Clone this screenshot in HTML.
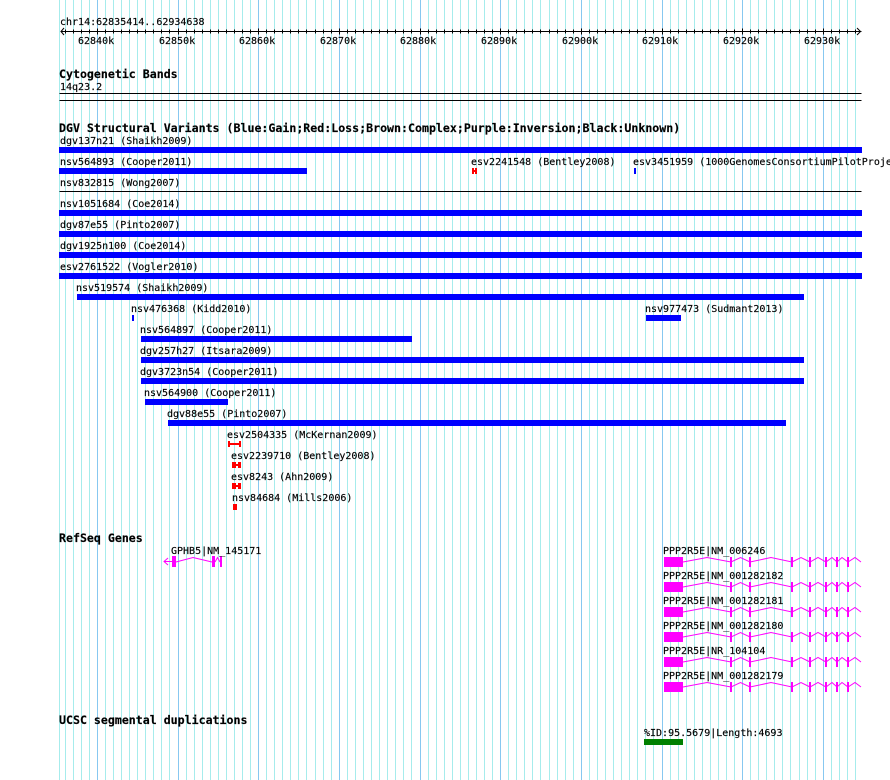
<!DOCTYPE html>
<html><head><meta charset="utf-8"><title>Genome Browser</title>
<style>
html,body{margin:0;padding:0;background:#fff;width:890px;height:780px;overflow:hidden}
svg{display:block}
text{font-family:"DejaVu Sans Mono","Liberation Mono",monospace;font-size:10px;fill:#000;stroke:#000;stroke-width:.15px}
.b{font-weight:bold;font-size:11.6px}
</style></head><body>
<svg width="890" height="780" viewBox="0 0 890 780" xmlns="http://www.w3.org/2000/svg">
<g shape-rendering="crispEdges">
<path fill="#a6ecec" d="M59 0h1v780h-1zM65 0h1v780h-1zM73 0h1v780h-1zM81 0h1v780h-1zM89 0h1v780h-1zM105 0h1v780h-1zM113 0h1v780h-1zM121 0h1v780h-1zM129 0h1v780h-1zM137 0h1v780h-1zM145 0h1v780h-1zM153 0h1v780h-1zM161 0h1v780h-1zM169 0h1v780h-1zM186 0h1v780h-1zM194 0h1v780h-1zM202 0h1v780h-1zM210 0h1v780h-1zM218 0h1v780h-1zM226 0h1v780h-1zM234 0h1v780h-1zM242 0h1v780h-1zM250 0h1v780h-1zM266 0h1v780h-1zM274 0h1v780h-1zM282 0h1v780h-1zM290 0h1v780h-1zM298 0h1v780h-1zM306 0h1v780h-1zM315 0h1v780h-1zM323 0h1v780h-1zM331 0h1v780h-1zM347 0h1v780h-1zM355 0h1v780h-1zM363 0h1v780h-1zM371 0h1v780h-1zM379 0h1v780h-1zM387 0h1v780h-1zM395 0h1v780h-1zM403 0h1v780h-1zM411 0h1v780h-1zM428 0h1v780h-1zM436 0h1v780h-1zM444 0h1v780h-1zM452 0h1v780h-1zM460 0h1v780h-1zM468 0h1v780h-1zM476 0h1v780h-1zM484 0h1v780h-1zM492 0h1v780h-1zM508 0h1v780h-1zM516 0h1v780h-1zM524 0h1v780h-1zM532 0h1v780h-1zM540 0h1v780h-1zM549 0h1v780h-1zM557 0h1v780h-1zM565 0h1v780h-1zM573 0h1v780h-1zM589 0h1v780h-1zM597 0h1v780h-1zM605 0h1v780h-1zM613 0h1v780h-1zM621 0h1v780h-1zM629 0h1v780h-1zM637 0h1v780h-1zM645 0h1v780h-1zM653 0h1v780h-1zM670 0h1v780h-1zM678 0h1v780h-1zM686 0h1v780h-1zM694 0h1v780h-1zM702 0h1v780h-1zM710 0h1v780h-1zM718 0h1v780h-1zM726 0h1v780h-1zM734 0h1v780h-1zM750 0h1v780h-1zM758 0h1v780h-1zM766 0h1v780h-1zM774 0h1v780h-1zM782 0h1v780h-1zM790 0h1v780h-1zM799 0h1v780h-1zM807 0h1v780h-1zM815 0h1v780h-1zM831 0h1v780h-1zM839 0h1v780h-1zM847 0h1v780h-1zM855 0h1v780h-1z"/>
<path fill="#87c8f0" d="M97 0h1v780h-1zM178 0h1v780h-1zM258 0h1v780h-1zM339 0h1v780h-1zM420 0h1v780h-1zM500 0h1v780h-1zM581 0h1v780h-1zM662 0h1v780h-1zM742 0h1v780h-1zM823 0h1v780h-1z"/>
<path fill="none" stroke="#000" stroke-width="1" transform="translate(.5 .5)" d="M60 31H861M65 29V33M73 29V33M81 29V33M89 29V33M97 28V34M105 29V33M113 29V33M121 29V33M129 29V33M137 29V33M145 29V33M153 29V33M161 29V33M169 29V33M178 28V34M186 29V33M194 29V33M202 29V33M210 29V33M218 29V33M226 29V33M234 29V33M242 29V33M250 29V33M258 28V34M266 29V33M274 29V33M282 29V33M290 29V33M298 29V33M306 29V33M315 29V33M323 29V33M331 29V33M339 28V34M347 29V33M355 29V33M363 29V33M371 29V33M379 29V33M387 29V33M395 29V33M403 29V33M411 29V33M420 28V34M428 29V33M436 29V33M444 29V33M452 29V33M460 29V33M468 29V33M476 29V33M484 29V33M492 29V33M500 28V34M508 29V33M516 29V33M524 29V33M532 29V33M540 29V33M549 29V33M557 29V33M565 29V33M573 29V33M581 28V34M589 29V33M597 29V33M605 29V33M613 29V33M621 29V33M629 29V33M637 29V33M645 29V33M653 29V33M662 28V34M670 29V33M678 29V33M686 29V33M694 29V33M702 29V33M710 29V33M718 29V33M726 29V33M734 29V33M742 28V34M750 29V33M758 29V33M766 29V33M774 29V33M782 29V33M790 29V33M799 29V33M807 29V33M815 29V33M823 28V34M831 29V33M839 29V33M847 29V33M855 29V33"/>
<path fill="none" stroke="#000" stroke-width="1" transform="translate(.5 .5)" d="M59 93H861M59 100H861M59 191H861"/>
</g>
<path d="M64 28L61 31.500L64 35M857 28L860.500 31.500L857 35" stroke="#000" fill="none"/>
<g shape-rendering="crispEdges" fill="#0000ff">
<rect x="59" y="147" width="803" height="6"/>
<rect x="59" y="168" width="248" height="6"/>
<rect x="634" y="168" width="2" height="6"/>
<rect x="59" y="210" width="803" height="6"/>
<rect x="59" y="231" width="803" height="6"/>
<rect x="59" y="252" width="803" height="6"/>
<rect x="59" y="273" width="803" height="6"/>
<rect x="77" y="294" width="727" height="6"/>
<rect x="132" y="315" width="2" height="6"/>
<rect x="646" y="315" width="35" height="6"/>
<rect x="141" y="336" width="271" height="6"/>
<rect x="141" y="357" width="663" height="6"/>
<rect x="141" y="378" width="663" height="6"/>
<rect x="145" y="399" width="83" height="6"/>
<rect x="168" y="420" width="618" height="6"/>
</g>
<g shape-rendering="crispEdges" fill="#ff0000">
<rect x="472" y="168" width="2" height="6"/><rect x="475" y="168" width="2" height="6"/><rect x="474" y="170" width="1" height="2"/>
<rect x="228" y="441" width="2" height="6"/><rect x="239" y="441" width="2" height="6"/><rect x="230" y="443" width="9" height="2"/>
<rect x="232" y="462" width="4" height="6"/><rect x="238" y="462" width="3" height="6"/><rect x="236" y="464" width="2" height="2"/>
<rect x="232" y="483" width="4" height="6"/><rect x="238" y="483" width="3" height="6"/><rect x="236" y="485" width="2" height="2"/>
<rect x="233" y="504" width="4" height="6"/>
</g>
<rect x="644" y="739" width="39" height="6" fill="#008000" shape-rendering="crispEdges"/>
<g fill="#ff00ff" shape-rendering="crispEdges">
<rect x="172" y="556" width="4" height="11"/><rect x="212" y="556" width="3" height="11"/><rect x="220" y="556" width="2" height="11"/>
<rect x="664" y="557" width="19" height="10"/><rect x="664" y="582" width="19" height="10"/><rect x="664" y="607" width="19" height="10"/><rect x="664" y="632" width="19" height="10"/><rect x="664" y="657" width="19" height="10"/><rect x="664" y="682" width="19" height="10"/>
</g>
<path d="M168 558L164 561.500L168 565M164 561.500H172M176 562L193 557.500L212 562M215 562L217.500 557.500L220 562" fill="none" stroke="#ff00ff"/>
<defs><g id="g"><path fill="none" stroke="#ff00ff" d="M683 562L707 557.500L731 562L740.500 557.500L750 562L771 557.500L792 562L801 557.500L810 562L818 557.500L826 562L832 557.500L837 562L842 557.500L848 562L855 557.500L861 562"/><path fill="none" stroke="#ff00ff" stroke-width="2" shape-rendering="crispEdges" d="M731 557V567M750 557V567M792 557V567M810 557V567M826 557V567M837 557V567M848 557V567"/></g></defs>
<use href="#g"/><use href="#g" y="25"/><use href="#g" y="50"/><use href="#g" y="75"/><use href="#g" y="100"/><use href="#g" y="125"/>
<text x="60" y="25">chr14:62835414..62934638</text>
<text x="78" y="44">62840k</text><text x="159" y="44">62850k</text><text x="239" y="44">62860k</text><text x="320" y="44">62870k</text><text x="400" y="44">62880k</text><text x="481" y="44">62890k</text><text x="562" y="44">62900k</text><text x="642" y="44">62910k</text><text x="723" y="44">62920k</text><text x="804" y="44">62930k</text>
<text class="b" x="59" y="78">Cytogenetic Bands</text>
<text x="60" y="90">14q23.2</text>
<text class="b" x="59" y="132">DGV Structural Variants (Blue:Gain;Red:Loss;Brown:Complex;Purple:Inversion;Black:Unknown)</text>
<text x="60" y="144">dgv137n21 (Shaikh2009)</text>
<text x="60" y="165">nsv564893 (Cooper2011)</text>
<text x="471" y="165">esv2241548 (Bentley2008)</text>
<text x="633" y="165">esv3451959 (1000GenomesConsortiumPilotProject)</text>
<text x="60" y="186">nsv832815 (Wong2007)</text>
<text x="60" y="207">nsv1051684 (Coe2014)</text>
<text x="60" y="228">dgv87e55 (Pinto2007)</text>
<text x="60" y="249">dgv1925n100 (Coe2014)</text>
<text x="60" y="270">esv2761522 (Vogler2010)</text>
<text x="76" y="291">nsv519574 (Shaikh2009)</text>
<text x="131" y="312">nsv476368 (Kidd2010)</text>
<text x="645" y="312">nsv977473 (Sudmant2013)</text>
<text x="140" y="333">nsv564897 (Cooper2011)</text>
<text x="140" y="354">dgv257h27 (Itsara2009)</text>
<text x="140" y="375">dgv3723n54 (Cooper2011)</text>
<text x="144" y="396">nsv564900 (Cooper2011)</text>
<text x="167" y="417">dgv88e55 (Pinto2007)</text>
<text x="227" y="438">esv2504335 (McKernan2009)</text>
<text x="231" y="459">esv2239710 (Bentley2008)</text>
<text x="231" y="480">esv8243 (Ahn2009)</text>
<text x="232" y="501">nsv84684 (Mills2006)</text>
<text class="b" x="59" y="542">RefSeq Genes</text>
<text x="171" y="554">GPHB5|NM_145171</text>
<text x="663" y="554">PPP2R5E|NM_006246</text>
<text x="663" y="579">PPP2R5E|NM_001282182</text>
<text x="663" y="604">PPP2R5E|NM_001282181</text>
<text x="663" y="629">PPP2R5E|NM_001282180</text>
<text x="663" y="654">PPP2R5E|NR_104104</text>
<text x="663" y="679">PPP2R5E|NM_001282179</text>
<text class="b" x="59" y="724">UCSC segmental duplications</text>
<text x="644" y="736">%ID:95.5679|Length:4693</text>
</svg>
</body></html>
